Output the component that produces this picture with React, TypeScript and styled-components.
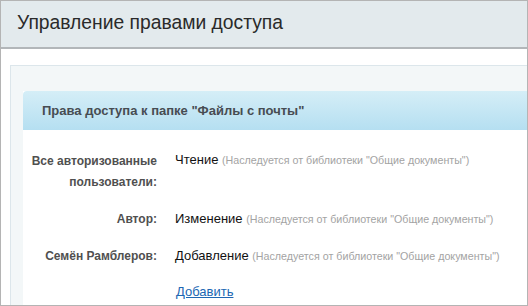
import styled, { createGlobalStyle } from 'styled-components'

interface IAccessRow {
  who: string[]
  right: string
  lift: number
}

const NOTE = '(Наследуется от библиотеки "Общие документы")'

const rows: IAccessRow[] = [
  { who: ['Все авторизованные', 'пользователи:'], right: 'Чтение', lift: 2 },
  { who: ['Автор:'], right: 'Изменение', lift: 1 },
  { who: ['Семён Рамблеров:'], right: 'Добавление', lift: 1 },
]

export default function App() {
  return (
    <>
      <GlobalStyle />
      <Frame>
        <Header>
          <h1>Управление правами доступа</h1>
        </Header>
        <Body>
          <Panel>
            <Card>
              <TitleBar>Права доступа к папке "Файлы с почты"</TitleBar>
              <RightsList>
                {rows.map((row) => (
                  <RightsRow key={row.right}>
                    <Who>
                      {row.who.map((line) => (
                        <span key={line}>{line}</span>
                      ))}
                    </Who>
                    <Right $lift={row.lift}>
                      {row.right} <Note>{NOTE}</Note>
                    </Right>
                  </RightsRow>
                ))}
                <RightsRow>
                  <Who />
                  <AddLink href="#">Добавить</AddLink>
                </RightsRow>
              </RightsList>
            </Card>
          </Panel>
        </Body>
      </Frame>
    </>
  )
}

const GlobalStyle = createGlobalStyle`
  * {
    box-sizing: border-box;
  }

  body {
    margin: 0;
    background: #ffffff;
    font-family: "Liberation Sans", Arial, sans-serif;
  }
`

const Frame = styled.div`
  border: 1px solid #b4b4b4;
  display: flex;
  flex-direction: column;
  height: 306px;
  overflow: hidden;
  width: 528px;
`

const Header = styled.div`
  align-items: center;
  background: #e3eaed;
  border-bottom: 2px solid #b2b6b9;
  display: flex;
  flex-shrink: 0;
  height: 48px;
  padding: 0 0 2px 16px;

  h1 {
    color: #2a2a2a;
    font-size: 19.3px;
    font-weight: normal;
    margin: 0;
  }
`

const Body = styled.div`
  display: flex;
  flex: 1;
  flex-direction: column;
  min-height: 0;
  padding: 16px 0 0 9px;
`

const Panel = styled.div`
  background: #f3f7f8;
  border-left: 1px solid #dce6eb;
  border-top: 1px solid #dce6eb;
  display: flex;
  flex: 1;
  flex-direction: column;
  padding: 25px 0 0 12px;
`

const Card = styled.div`
  background: #ffffff;
  display: flex;
  flex: 1;
  flex-direction: column;
`

const TitleBar = styled.div`
  align-items: center;
  background: linear-gradient(to bottom, #d5eef7, #b5dff1);
  border-radius: 4px 0 0 0;
  color: #474c52;
  display: flex;
  flex-shrink: 0;
  font-size: 13px;
  font-weight: bold;
  height: 39px;
  padding: 0 0 0 19px;
`

const RightsList = styled.div`
  display: flex;
  flex-direction: column;
  gap: 16px;
  padding-top: 21px;
`

const RightsRow = styled.div`
  display: grid;
  gap: 18px;
  grid-template-columns: 134px 1fr;
`

const Who = styled.div`
  color: #505050;
  display: flex;
  flex-direction: column;
  font-size: 12px;
  font-weight: bold;
  line-height: 21px;
  text-align: right;
  white-space: nowrap;
`

const Right = styled.div<{ $lift: number }>`
  color: #111111;
  font-size: 13px;
  line-height: 21px;
  margin-top: ${({ $lift }) => -$lift}px;
  white-space: nowrap;
`

const Note = styled.span`
  color: #a3a3a3;
  font-size: 10.7px;
`

const AddLink = styled.a`
  color: #2067b3;
  font-size: 13px;
  justify-self: start;
  line-height: 21px;
  margin: -2px 0 0 1px;
  text-decoration: underline;
`
